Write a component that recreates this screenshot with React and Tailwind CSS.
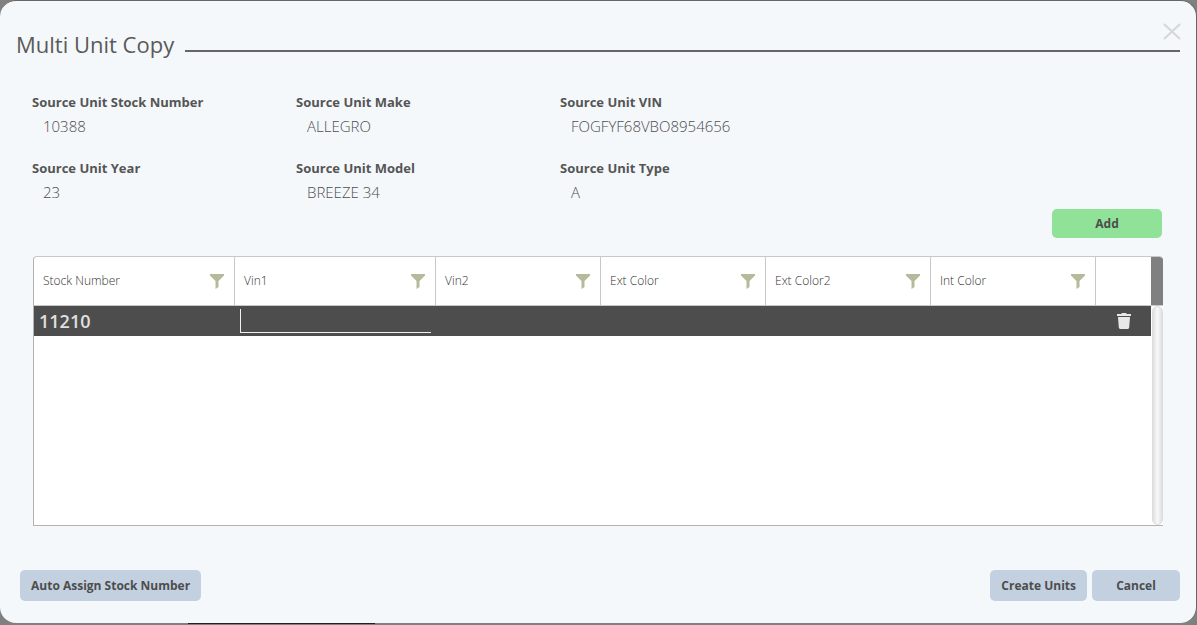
const details = [
  { label: "Source Unit Stock Number", value: "10388" },
  { label: "Source Unit Make", value: "ALLEGRO" },
  { label: "Source Unit VIN", value: "FOGFYF68VBO8954656" },
  { label: "Source Unit Year", value: "23" },
  { label: "Source Unit Model", value: "BREEZE 34" },
  { label: "Source Unit Type", value: "A" },
];

const columns = [
  { name: "Stock Number", width: "w-[201px]" },
  { name: "Vin1", width: "w-[201px]" },
  { name: "Vin2", width: "w-[165px]" },
  { name: "Ext Color", width: "w-[165px]" },
  { name: "Ext Color2", width: "w-[165px]" },
  { name: "Int Color", width: "w-[165px]" },
];

function FunnelIcon() {
  return (
    <svg width="14" height="15" viewBox="0 0 14 15" fill="#b4ba9a" aria-hidden="true">
      <path d="M0 0h14v1.5L8.5 7v6L5.5 15V7L0 1.5z" />
    </svg>
  );
}

function TrashIcon() {
  return (
    <svg width="14" height="16" viewBox="0 0 14 16" fill="#e8e8e8" aria-hidden="true">
      <path d="M0 1h4.2L5 0h4l.8 1H14v2H0zM1 4h12l-.8 10.6c-.1.8-.6 1.4-1.4 1.4H3.2c-.8 0-1.3-.6-1.4-1.4z" />
    </svg>
  );
}

function CloseIcon() {
  return (
    <svg width="18" height="17" viewBox="0 0 18 17" fill="none" stroke="#d5d6d7" strokeWidth="2" aria-hidden="true">
      <path d="M1 1l16 15M17 1L1 16" />
    </svg>
  );
}

function FooterButton({ children, className = "" }) {
  return (
    <button
      type="button"
      className={`h-[31px] rounded-[5px] bg-[#c3d0e0] px-[11px] text-[12px] font-bold text-[#4d4d4d] ${className}`}
    >
      {children}
    </button>
  );
}

export default function App() {
  return (
    <div className="flex min-h-screen flex-col bg-[#808080] pb-0.5 font-['Open_Sans',sans-serif] text-[#4d4d4d]">
      <main
        role="dialog"
        aria-labelledby="dialog-title"
        className="relative flex grow flex-col rounded-2xl border-t border-r border-[#666] bg-[#f4f8fb]"
      >
        <button type="button" aria-label="Close" className="absolute top-[22px] right-[15px]">
          <CloseIcon />
        </button>

        <header className="flex items-center gap-[11px] px-4 pt-[27px]">
          <h1 id="dialog-title" className="text-[22px] leading-8 text-[#5a5a5a]">
            Multi Unit Copy
          </h1>
          <div className="mt-[14px] h-0.5 grow bg-[#666]" />
        </header>

        <dl className="grid grid-cols-[264px_264px_auto] gap-y-[17px] px-8 pt-8">
          {details.map((d) => (
            <div key={d.label}>
              <dt className="text-[13px] leading-5 font-bold text-[#555]">{d.label}</dt>
              <dd className="pl-[11px] text-[15px] leading-[29px] font-light">{d.value}</dd>
            </div>
          ))}
        </dl>

        <div className="flex justify-end pt-0.5 pr-[34px]">
          <button type="button" className="h-[29px] w-[110px] rounded-[5px] bg-[#8fe297] text-[12px] font-bold">
            Add
          </button>
        </div>

        <section className="mt-[18px] mr-[33px] ml-[33px] flex h-[270px] overflow-hidden rounded-t border border-r-0 border-[#b3b3b3] border-t-[#c8c8c8] bg-white">
          <div className="grow">
            <table className="w-full table-fixed border-separate border-spacing-0">
              <thead>
                <tr className="h-[49px]">
                  {columns.map((c) => (
                    <th
                      key={c.name}
                      scope="col"
                      className={`border-r border-b border-[#c8c8c8] pr-[10px] pl-[9px] text-left text-[12px] font-light text-[#333] ${c.width}`}
                    >
                      <div className="flex items-center justify-between">
                        <span>{c.name}</span>
                        <button type="button" aria-label={`Filter ${c.name}`}>
                          <FunnelIcon />
                        </button>
                      </div>
                    </th>
                  ))}
                  <th aria-label="Actions" className="w-[55px] border-b border-[#c8c8c8]" />
                </tr>
              </thead>
              <tbody>
                <tr className="h-[30px] bg-[#4d4d4d] text-[#e0e0e0]">
                  <td className="pl-[5px] text-[18px] leading-[30px] font-semibold">11210</td>
                  <td className="pl-[5px]">
                    <input
                      type="text"
                      aria-label="Vin1"
                      className="block h-6 w-[191px] border-b border-l border-[#f0f0f0] bg-transparent px-1 text-[16px] outline-none"
                    />
                  </td>
                  <td />
                  <td />
                  <td />
                  <td />
                  <td>
                    <button type="button" aria-label="Delete row" className="mx-auto block">
                      <TrashIcon />
                    </button>
                  </td>
                </tr>
              </tbody>
            </table>
          </div>
          <div className="flex w-3 shrink-0 flex-col">
            <div className="h-12 bg-[#808080]" />
            <div className="h-px bg-[#c8c8c8]" />
            <div className="ml-px grow rounded-full border border-[#dcdcdc] bg-linear-to-r from-[#e0e0e0] via-[#f8f8f8] to-[#e0e0e0]" />
          </div>
        </section>

        <footer className="mt-auto flex gap-[5px] pt-11 pr-4 pb-[22px] pl-5">
          <FooterButton className="mr-auto">Auto Assign Stock Number</FooterButton>
          <FooterButton>Create Units</FooterButton>
          <FooterButton className="w-[88px]">Cancel</FooterButton>
        </footer>
      </main>
      <div className="-mb-px ml-[188px] h-px w-[187px] bg-[#202020]" />
    </div>
  );
}
